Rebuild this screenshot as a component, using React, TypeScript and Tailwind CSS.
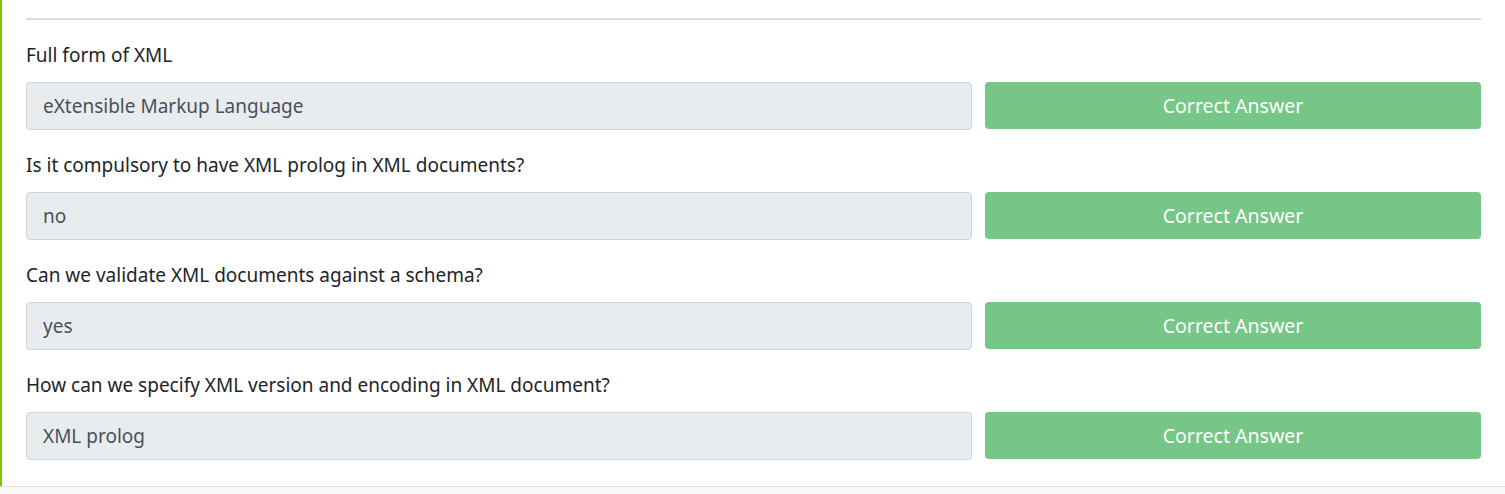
const rows = [
  { q: 'Full form of XML', a: 'eXtensible Markup Language' },
  { q: 'Is it compulsory to have XML prolog in XML documents?', a: 'no' },
  { q: 'Can we validate XML documents against a schema?', a: 'yes' },
  { q: 'How can we specify XML version and encoding in XML document?', a: 'XML prolog' },
];

export default function App() {
  return (
    <div className="w-[1505px] h-[494px] bg-white overflow-hidden font-['Noto_Sans',sans-serif]">
      <div className="h-[486px] border-l-2 border-[#7dc800] px-6 pt-[18px]">
        <div className="h-[2px] bg-[#dcdcdc]" />
        <div className="pt-[22px]">
          {rows.map((r) => (
            <div key={r.q} className="mb-[22px]">
              <label className="block text-[19px] leading-[27px] text-[#212529] mb-[13px]">{r.q}</label>
              <div className="flex gap-[13px]">
                <input
                  readOnly
                  value={r.a}
                  className="w-[946px] h-[48px] px-4 text-[19px] text-[#495057] bg-[#e9ecef] border border-[#ced4da] rounded-[4px] outline-none"
                />
                <button className="flex-1 h-[47px] bg-[#75c687] text-white text-[19.5px] rounded-[4px]">
                  Correct Answer
                </button>
              </div>
            </div>
          ))}
        </div>
      </div>
      <div className="h-[8px] bg-[#f8f8f8] border-t border-[#e0e0e0]" />
    </div>
  );
}
